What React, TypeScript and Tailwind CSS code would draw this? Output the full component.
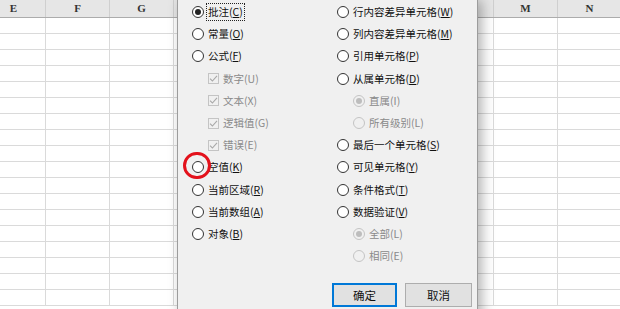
import React from "react";

type Item = {
  kind: "radio" | "check";
  label: string;
  hot: string;
  checked?: boolean;
  disabled?: boolean;
  indent?: boolean;
  focus?: boolean;
};

const leftItems: Item[] = [
  { kind: "radio", label: "批注", hot: "C", checked: true, focus: true },
  { kind: "radio", label: "常量", hot: "O" },
  { kind: "radio", label: "公式", hot: "F" },
  { kind: "check", label: "数字", hot: "U", checked: true, disabled: true, indent: true },
  { kind: "check", label: "文本", hot: "X", checked: true, disabled: true, indent: true },
  { kind: "check", label: "逻辑值", hot: "G", checked: true, disabled: true, indent: true },
  { kind: "check", label: "错误", hot: "E", checked: true, disabled: true, indent: true },
  { kind: "radio", label: "空值", hot: "K" },
  { kind: "radio", label: "当前区域", hot: "R" },
  { kind: "radio", label: "当前数组", hot: "A" },
  { kind: "radio", label: "对象", hot: "B" },
];

const rightItems: Item[] = [
  { kind: "radio", label: "行内容差异单元格", hot: "W" },
  { kind: "radio", label: "列内容差异单元格", hot: "M" },
  { kind: "radio", label: "引用单元格", hot: "P" },
  { kind: "radio", label: "从属单元格", hot: "D" },
  { kind: "radio", label: "直属", hot: "I", checked: true, disabled: true, indent: true },
  { kind: "radio", label: "所有级别", hot: "L", disabled: true, indent: true },
  { kind: "radio", label: "最后一个单元格", hot: "S" },
  { kind: "radio", label: "可见单元格", hot: "Y" },
  { kind: "radio", label: "条件格式", hot: "T" },
  { kind: "radio", label: "数据验证", hot: "V" },
  { kind: "radio", label: "全部", hot: "L", checked: true, disabled: true, indent: true },
  { kind: "radio", label: "相同", hot: "E", disabled: true, indent: true },
];

const columns = ["E", "F", "G", "H", "I", "J", "K", "L", "M", "N"];
const rows = Array.from({ length: 18 }, (_, i) => i);

function Radio({ checked, disabled }: { checked?: boolean; disabled?: boolean }) {
  return (
    <span
      className={`flex items-center justify-center w-[12px] h-[12px] rounded-full border shrink-0 ${
        disabled ? "border-[#c4c4c4] bg-[#f0f0f0]" : "border-[#333] bg-white"
      }`}
    >
      {checked && (
        <span className={`w-[6px] h-[6px] rounded-full ${disabled ? "bg-[#bdbdbd]" : "bg-[#222]"}`} />
      )}
    </span>
  );
}

function Check({ checked }: { checked?: boolean }) {
  return (
    <span className="flex items-center justify-center w-[11px] h-[11px] border border-[#c4c4c4] bg-[#f0f0f0] shrink-0">
      {checked && (
        <svg width="9" height="9" viewBox="0 0 9 9">
          <path d="M1 4.6 L3.4 7 L8 1.8" fill="none" stroke="#a8a8a8" strokeWidth="1.1" />
        </svg>
      )}
    </span>
  );
}

function Option({ item }: { item: Item }) {
  const textCls = item.disabled ? "text-[#8a8a8a]" : "text-[#111]";
  return (
    <div className={`h-[22.2px] flex items-center ${item.indent ? "pl-[16px]" : ""}`}>
      {item.kind === "radio" ? (
        <Radio checked={item.checked} disabled={item.disabled} />
      ) : (
        <Check checked={item.checked} />
      )}
      <span
        className={`ml-[4px] leading-[14px] whitespace-nowrap ${textCls} ${
          item.focus ? "outline outline-1 outline-dotted outline-[#222] outline-offset-[1px]" : ""
        }`}
      >
        {item.label}(
        {item.disabled ? item.hot : <span className="underline underline-offset-[1px]">{item.hot}</span>})
      </span>
    </div>
  );
}

export default function App() {
  return (
    <div
      className="relative w-[620px] h-[309px] overflow-hidden bg-white"
      style={{ fontFamily: '"Noto Sans CJK SC", "Noto Sans", sans-serif' }}
    >
      {/* spreadsheet behind */}
      <div className="ml-[-18px] w-[640px]">
        <div className="flex h-[18px] bg-[#e6e6e6] border-b border-[#acacac]">
          {columns.map((c) => (
            <div
              key={c}
              className="w-[64px] shrink-0 border-r border-[#cfcfcf] flex items-center justify-center text-[11px] text-[#333] font-bold"
              style={{ fontFamily: '"Liberation Serif", "DejaVu Serif", serif' }}
            >
              {c}
            </div>
          ))}
        </div>
        {rows.map((r) => (
          <div key={r} className="flex h-[16px] border-b border-[#dadada]">
            {columns.map((c) => (
              <div key={c} className="w-[64px] shrink-0 border-r border-[#dadada]" />
            ))}
          </div>
        ))}
      </div>

      {/* dialog */}
      <div className="absolute left-[177px] top-0 w-[301px] h-[330px] bg-[#f0f0f0] border-x border-[#9c9c9c] shadow-[4px_0_12px_rgba(0,0,0,0.3)] text-[10.5px]">
        <div className="grid grid-cols-[145px_1fr] pl-[14px] pt-[1px]">
          <div>
            {leftItems.map((it) => (
              <Option key={it.label} item={it} />
            ))}
          </div>
          <div>
            {rightItems.map((it) => (
              <Option key={it.label} item={it} />
            ))}
          </div>
        </div>
        <div className="flex justify-end gap-[8px] pr-[5px] mt-[16px]">
          <button className="w-[65px] h-[24px] bg-[#e1e1e1] border-2 border-[#0078d7] text-[#111] text-[11.5px]">
            确定
          </button>
          <button className="w-[67px] h-[24px] bg-[#e1e1e1] border border-[#adadad] text-[#111] text-[11.5px]">
            取消
          </button>
        </div>
      </div>

      {/* red highlight ring */}
      <div className="absolute left-[183px] top-[152px] w-[28px] h-[27px] rounded-full border-[3.5px] border-[#e3111b] blur-[0.4px]" />
    </div>
  );
}
